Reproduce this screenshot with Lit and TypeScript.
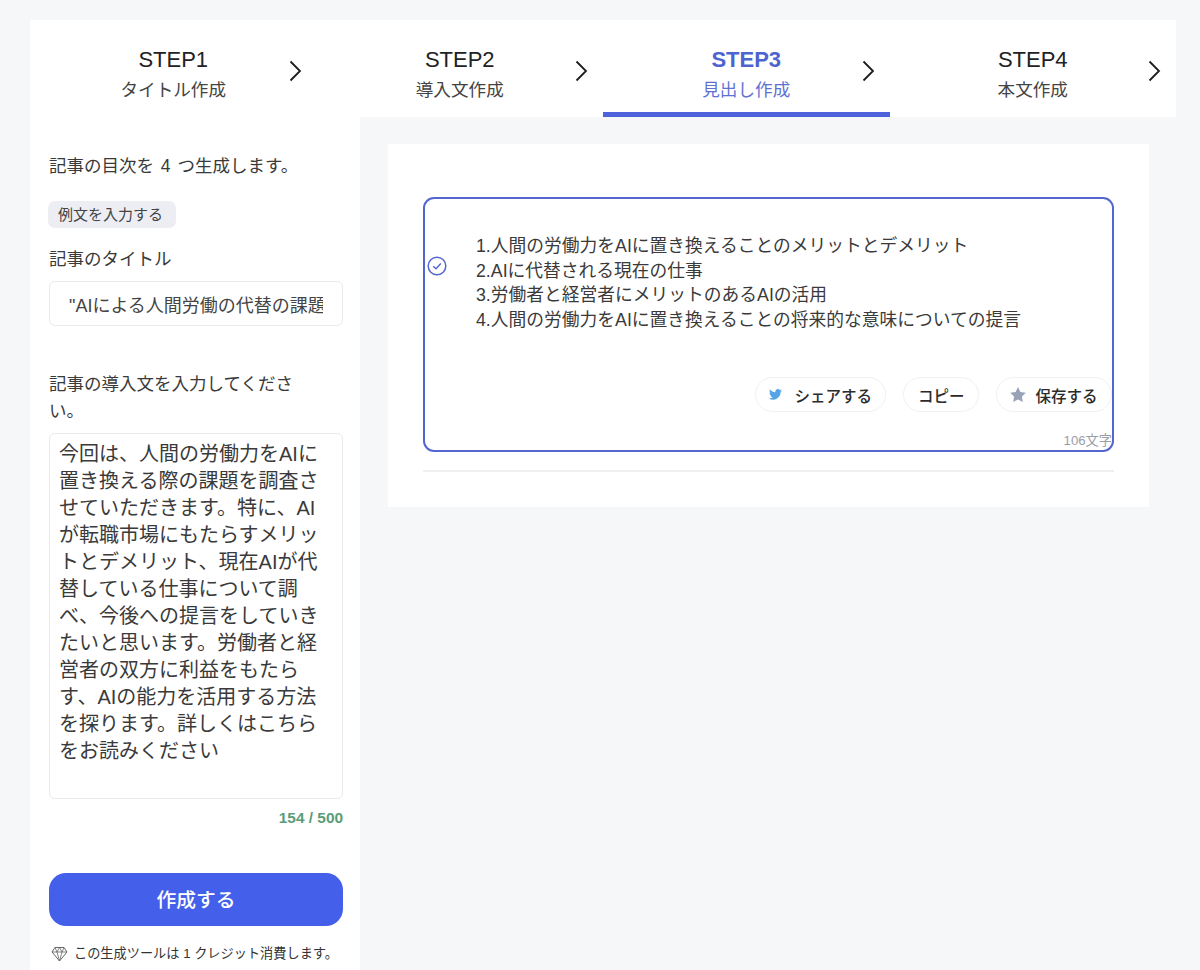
import { LitElement, html, css } from "lit";
import { customElement } from "lit/decorators.js";

const chevron = html`<svg class="chev" viewBox="0 0 14 22" width="14" height="22"><path d="M2.5 1.5 L12 11 L2.5 20.5" fill="none" stroke="#1c1c1e" stroke-width="1.8"/></svg>`;

const steps = [
  { s: "STEP1", t: "タイトル作成" },
  { s: "STEP2", t: "導入文作成" },
  { s: "STEP3", t: "見出し作成", active: true },
  { s: "STEP4", t: "本文作成" },
];

const intro =
  "今回は、人間の労働力をAIに置き換える際の課題を調査させていただきます。特に、AIが転職市場にもたらすメリットとデメリット、現在AIが代替している仕事について調べ、今後への提言をしていきたいと思います。労働者と経営者の双方に利益をもたらす、AIの能力を活用する方法を探ります。詳しくはこちらをお読みください";

const lines = [
  "1.人間の労働力をAIに置き換えることのメリットとデメリット",
  "2.AIに代替される現在の仕事",
  "3.労働者と経営者にメリットのあるAIの活用",
  "4.人間の労働力をAIに置き換えることの将来的な意味についての提言",
];

@customElement("app-root")
export class AppRoot extends LitElement {
  static styles = css`
    :host {
      display: block;
      height: 970px;
      overflow: hidden;
      background: #f6f7f9;
      box-sizing: border-box;
      padding: 20px 24px 0 30px;
      font-family: "Liberation Sans", "Noto Sans CJK JP", sans-serif;
      color: #333;
    }
    .tabs {
      display: grid;
      grid-template-columns: repeat(4, 1fr);
      background: #fff;
    }
    .tab {
      height: 97px;
      box-sizing: border-box;
      padding-top: 25px;
      border-bottom: 5px solid transparent;
      display: grid;
      grid-template-columns: 1fr auto 1fr;
      color: #222;
    }
    .tab.active {
      border-bottom-color: #4d63dc;
      color: #4d63d0;
    }
    .tab-text {
      grid-column: 2;
      text-align: center;
    }
    .tab-step {
      font-size: 22px;
      line-height: 30px;
    }
    .active .tab-step {
      font-weight: 700;
    }
    .tab-sub {
      font-size: 17.6px;
      line-height: 30px;
      color: #444;
    }
    .active .tab-sub {
      color: #5f72d4;
    }
    .chev {
      grid-column: 3;
      justify-self: end;
      margin: 15px 15px 0 0;
    }
    .body {
      display: flex;
      align-items: flex-start;
    }
    .side {
      width: 330px;
      height: 853px;
      box-sizing: border-box;
      background: #fff;
      padding: 36px 17px 0 19px;
      flex: none;
    }
    .text {
      font-size: 17.5px;
      line-height: 27px;
      margin: 0;
      color: #3a3a3a;
    }
    .lead {
      word-spacing: 2px;
    }
    .ex {
      display: inline-block;
      margin: 21px 0 0 -1px;
      height: 27px;
      line-height: 27px;
      padding: 0 13px 0 10px;
      background: #edeef3;
      border-radius: 7px;
      font-size: 15px;
      color: #444;
      white-space: nowrap;
    }
    .lab1 {
      margin-top: 18px;
    }
    .input {
      display: block;
      width: 100%;
      height: 45px;
      margin-top: 8px;
      box-sizing: border-box;
      border: 1px solid #e9eaee;
      border-radius: 6px;
      padding: 0 19px;
      font: inherit;
      font-size: 18px;
      color: #444;
      background: #fff;
      outline: none;
    }
    .lab2 {
      margin-top: 45px;
      padding-right: 20px;
    }
    .area {
      display: block;
      width: 100%;
      height: 366px;
      margin-top: 8px;
      box-sizing: border-box;
      border: 1px solid #e9eaee;
      border-radius: 6px;
      padding: 7px 9px;
      font: inherit;
      font-size: 20px;
      line-height: 27px;
      color: #3a3a3a;
      background: #fff;
      resize: none;
      outline: none;
      overflow: hidden;
    }
    .count {
      margin-top: 9px;
      text-align: right;
      font-size: 15.4px;
      line-height: 20px;
      font-weight: 700;
      color: #5a9c78;
    }
    .go {
      display: block;
      width: 100%;
      height: 53px;
      margin-top: 45px;
      border: 0;
      border-radius: 17px;
      padding: 0 0 3px;
      background: #4460ea;
      color: #fff;
      font: inherit;
      font-size: 19.8px;
      font-weight: 500;
    }
    .foot {
      display: flex;
      align-items: center;
      gap: 6px;
      margin: 18px 0 0 2px;
      font-size: 13.2px;
      line-height: 20px;
      color: #333;
      white-space: nowrap;
    }
    .main {
      flex: 1;
      padding: 27px 27px 0 28px;
      min-width: 0;
    }
    .card {
      background: #fff;
      padding: 53px 35px 35px;
    }
    .box {
      box-sizing: border-box;
      height: 255px;
      border: 2px solid #5467cf;
      border-radius: 11px;
      display: flex;
      align-items: flex-start;
    }
    .check {
      flex: none;
      margin: 57px 0 0 2px;
    }
    .res {
      flex: 1;
      min-width: 0;
      padding: 35px 0 0 29px;
    }
    .res-text {
      font-size: 17.75px;
      line-height: 24.6px;
      color: #3a3a3a;
      white-space: nowrap;
    }
    .acts {
      display: flex;
      justify-content: flex-end;
      gap: 17px;
      margin-top: 45px;
    }
    .btn {
      display: flex;
      align-items: center;
      gap: 9px;
      height: 35px;
      box-sizing: border-box;
      padding: 0 13.5px;
      border: 1.5px solid #f0f1f4;
      border-radius: 18px;
      background: #fff;
      font: inherit;
      font-size: 15.5px;
      font-weight: 500;
      color: #2b2b2b;
      white-space: nowrap;
    }
    .btn.share {
      gap: 12px;
    }
    .chars {
      margin-top: 20px;
      text-align: right;
      font-size: 13.2px;
      line-height: 18px;
      color: #9a9ea6;
    }
    .hr {
      height: 1.5px;
      margin-top: 18px;
      background: #eeeff1;
    }
  `;

  render() {
    return html`
      <div class="tabs">
        ${steps.map(
          (x) => html`<div class="tab ${x.active ? "active" : ""}">
            <div class="tab-text">
              <div class="tab-step">${x.s}</div>
              <div class="tab-sub">${x.t}</div>
            </div>
            ${chevron}
          </div>`
        )}
      </div>
      <div class="body">
        <aside class="side">
          <p class="text lead">記事の目次を 4 つ生成します。</p>
          <span class="ex">例文を入力する</span>
          <p class="text lab1">記事のタイトル</p>
          <input class="input" .value=${'"AIによる人間労働の代替の課題と解決策'} />
          <p class="text lab2">記事の導入文を入力してください。</p>
          <textarea class="area" .value=${intro}></textarea>
          <div class="count">154 / 500</div>
          <button class="go">作成する</button>
          <div class="foot">
            <svg width="17" height="16" viewBox="0 0 17 16" fill="none" stroke="#666" stroke-width="1">
              <path d="M4 1.500 H13 L16 6 L8.500 15 L1 6 Z" />
              <path d="M1 6 H16 M4 1.500 L6 6 L8.500 15 L11 6 L13 1.500 M6 6 L8.500 1.500 L11 6" stroke-width=".8" />
            </svg>
            <span>この生成ツールは 1 クレジット消費します。</span>
          </div>
        </aside>
        <main class="main">
          <section class="card">
            <div class="box">
              <svg class="check" width="20" height="20" viewBox="0 0 20 20" fill="none" stroke="#5467cf" stroke-width="1.5">
                <circle cx="10" cy="10" r="8.800" />
                <path d="M6.200 10.200 L9 12.800 L13.800 7.400" />
              </svg>
              <div class="res">
                <div class="res-text">${lines.map((l) => html`<div>${l}</div>`)}</div>
                <div class="acts">
                  <button class="btn share">
                    <svg width="13" height="11" viewBox="0 0 24 20" fill="#55a5e6">
                      <path d="M24 2.400c-.9.4-1.800.7-2.800.8 1-.6 1.800-1.600 2.200-2.700-1 .6-2 1-3.100 1.200C19.300.7 18 0 16.600 0c-2.700 0-4.900 2.200-4.900 4.900 0 .4 0 .8.100 1.100C7.700 5.800 4.100 3.900 1.700.9c-.4.700-.7 1.600-.7 2.500 0 1.700.9 3.200 2.200 4.100-.8 0-1.600-.2-2.200-.6v.1c0 2.400 1.700 4.400 3.900 4.800-.4.100-.8.200-1.300.2-.3 0-.6 0-.9-.1.600 2 2.400 3.400 4.600 3.400-1.700 1.300-3.800 2.100-6.100 2.100-.4 0-.8 0-1.200-.1 2.200 1.400 4.800 2.200 7.500 2.200 9.100 0 14-7.500 14-14v-.6c1-.7 1.800-1.600 2.500-2.500z" />
                    </svg>
                    シェアする
                  </button>
                  <button class="btn">コピー</button>
                  <button class="btn">
                    <svg width="16" height="15" viewBox="0 0 24 23" fill="#98a3b8">
                      <path d="M12 0l3.700 7.600 8.300 1.200-6 5.900 1.400 8.300L12 19l-7.400 4L6 14.700 0 8.800l8.300-1.200z" />
                    </svg>
                    保存する
                  </button>
                </div>
                <div class="chars">106文字</div>
              </div>
            </div>
            <div class="hr"></div>
          </section>
        </main>
      </div>
    `;
  }
}
